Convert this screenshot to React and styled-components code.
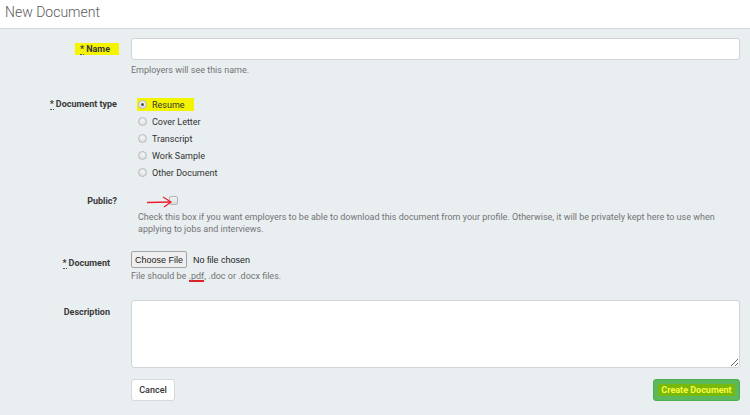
import React from "react"
import styled, { createGlobalStyle } from "styled-components"

const GlobalStyle = createGlobalStyle`
  html, body {
    margin: 0;
    padding: 0;
    background: #e9eef1;
  }
  body {
    font-family: Roboto, "Liberation Sans", Arial, sans-serif;
  }
`

const Page = styled.div`
  width: 750px;
  height: 415px;
  overflow: hidden;
  background: #e9eef1;
`

const Header = styled.div`
  height: 29px;
  background: #fff;
  border-bottom: 1px solid #d3d8db;
  box-sizing: border-box;
  padding: 2px 0 0 5px;
  font-size: 14px;
  font-weight: 300;
  line-height: 20px;
  color: #5a5a5a;
`

const Form = styled.form`
  padding: 9px 10px 0 0;
`

const Row = styled.div`
  display: flex;
  margin-top: ${p => p.$mt || 0}px;
`

const Label = styled.div`
  width: 119px;
  flex: none;
  box-sizing: border-box;
  text-align: right;
  padding-right: ${p => p.$pr || 0}px;
  padding-top: ${p => p.$pt || 0}px;
  font-size: 9px;
  font-weight: 700;
  line-height: 14px;
  color: #3a3a3a;
`

const Req = styled.abbr`
  text-decoration: none;
  border-bottom: 1px dotted #555;
  margin-right: 2px;
`

const Marker = styled.span`
  background: #f4f400;
  padding: 1px 9px 1px 5px;
`

const Field = styled.div`
  flex: 1;
  margin-left: 12px;
  padding-left: ${p => p.$pl || 0}px;
  display: ${p => (p.$split ? "flex" : "block")};
  justify-content: space-between;
`

const TextInput = styled.input`
  display: block;
  width: 100%;
  height: 22px;
  box-sizing: border-box;
  border: 1px solid #d0d4d7;
  border-radius: 3px;
  background: #fff;
  outline: none;
`

const Hint = styled.div`
  margin-top: ${p => p.$mt || 0}px;
  font-size: 9px;
  line-height: 12px;
  color: #747474;
`

const RadioList = styled.div`
  padding-left: 7px;
`

const RadioRow = styled.div`
  height: 17px;
  display: flex;
  align-items: center;
`

const RadioWrap = styled.label`
  display: inline-flex;
  align-items: center;
  gap: 5px;
  height: 13px;
  margin-left: -1px;
  padding: 0 ${p => (p.$hl ? 9 : 0)}px 0 1px;
  background: ${p => (p.$hl ? "#f4f400" : "transparent")};
  font-size: 9px;
  color: #333;
`

const RadioDot = styled.span`
  width: 9px;
  height: 9px;
  box-sizing: border-box;
  border-radius: 50%;
  border: 1px solid #b9bcbe;
  background: radial-gradient(circle at 50% 35%, #f6f6f6, #d6d6d6);
  display: flex;
  align-items: center;
  justify-content: center;
  &::after {
    content: "";
    width: 3px;
    height: 3px;
    border-radius: 50%;
    background: #555;
    display: ${p => (p.$on ? "block" : "none")};
  }
`

const CheckLine = styled.div`
  position: relative;
  height: 14px;
  display: flex;
  align-items: center;
`

const CheckBox = styled.span`
  width: 7px;
  height: 7px;
  margin-left: 31px;
  border: 1px solid #b3b6b8;
  border-radius: 2px;
  background: linear-gradient(#f3f3f3, #dadada);
`

const Arrow = styled.svg`
  position: absolute;
  left: 9px;
  top: 2px;
`

const FileLine = styled.div`
  display: flex;
  align-items: center;
  gap: 6px;
  font-family: "Liberation Sans", Arial, sans-serif;
  font-size: 9px;
  color: #222;
`

const FileButton = styled.span`
  height: 17px;
  width: 56px;
  box-sizing: border-box;
  display: flex;
  align-items: center;
  justify-content: center;
  background: #efefef;
  border: 1px solid #a3a3a3;
  border-radius: 2px;
`

const RedLine = styled.span`
  display: inline-block;
  height: 12px;
  line-height: 12px;
  box-sizing: border-box;
  border-bottom: 2px solid #e0202a;
`

const TextArea = styled.textarea`
  display: block;
  width: 100%;
  height: 68px;
  box-sizing: border-box;
  border: 1px solid #d0d4d7;
  border-radius: 3px;
  background: #fff;
  resize: vertical;
  outline: none;
`

const Button = styled.button`
  height: 22px;
  box-sizing: border-box;
  padding: 0;
  width: ${p => (p.$primary ? 87 : 44)}px;
  border-radius: 3px;
  border: 1px solid ${p => (p.$primary ? "#4cae4c" : "#d6d9db")};
  background: ${p => (p.$primary ? "#5cb85c" : "#fff")};
  color: #333;
  font-family: Roboto, "Liberation Sans", Arial, sans-serif;
  font-size: 9px;
  font-weight: ${p => (p.$primary ? 700 : 500)};
`

const GreenMark = styled.span`
  background: #78b90e;
  color: #fbfb3c;
  padding: 1px 3px;
`

const types = ["Resume", "Cover Letter", "Transcript", "Work Sample", "Other Document"]

export default function App() {
  return (
    <Page>
      <GlobalStyle />
      <Header>New Document</Header>
      <Form onSubmit={e => e.preventDefault()}>
        <Row>
          <Label $pt={4}>
            <Marker>
              <Req title="required">*</Req>Name
            </Marker>
          </Label>
          <Field>
            <TextInput type="text" />
            <Hint $mt={4}>Employers will see this name.</Hint>
          </Field>
        </Row>

        <Row $mt={20}>
          <Label $pt={1} $pr={2}>
            <Req title="required">*</Req>Document type
          </Label>
          <Field>
            <RadioList>
              {types.map((t, i) => (
                <RadioRow key={t}>
                  <RadioWrap $hl={i === 0}>
                    <RadioDot $on={i === 0} />
                    {t}
                  </RadioWrap>
                </RadioRow>
              ))}
            </RadioList>
          </Field>
        </Row>

        <Row $mt={12}>
          <Label $pt={1} $pr={2}>Public?</Label>
          <Field $pl={7}>
            <CheckLine>
              <Arrow width="26" height="14" viewBox="0 0 26 14">
                <path d="M0 7.5 L24 7" stroke="#e8202a" strokeWidth="1.4" fill="none" />
                <path d="M16 2 L24 7 L17 12" stroke="#e8202a" strokeWidth="1.2" fill="none" />
              </Arrow>
              <CheckBox />
            </CheckLine>
            <Hint $mt={4}>
              Check this box if you want employers to be able to download this document from your
              profile. Otherwise, it will be privately kept here to use when applying to jobs and
              interviews.
            </Hint>
          </Field>
        </Row>

        <Row $mt={16}>
          <Label $pt={5} $pr={9}>
            <Req title="required">*</Req>Document
          </Label>
          <Field>
            <FileLine>
              <FileButton>Choose File</FileButton>
              No file chosen
            </FileLine>
            <Hint $mt={2}>
              File should be <RedLine>.pdf</RedLine>, .doc or .docx files.
            </Hint>
          </Field>
        </Row>

        <Row $mt={18}>
          <Label $pt={5} $pr={9}>Description</Label>
          <Field>
            <TextArea />
          </Field>
        </Row>

        <Row $mt={11}>
          <Label />
          <Field $split>
            <Button type="button">Cancel</Button>
            <Button type="submit" $primary>
              <GreenMark>Create Document</GreenMark>
            </Button>
          </Field>
        </Row>
      </Form>
    </Page>
  )
}
